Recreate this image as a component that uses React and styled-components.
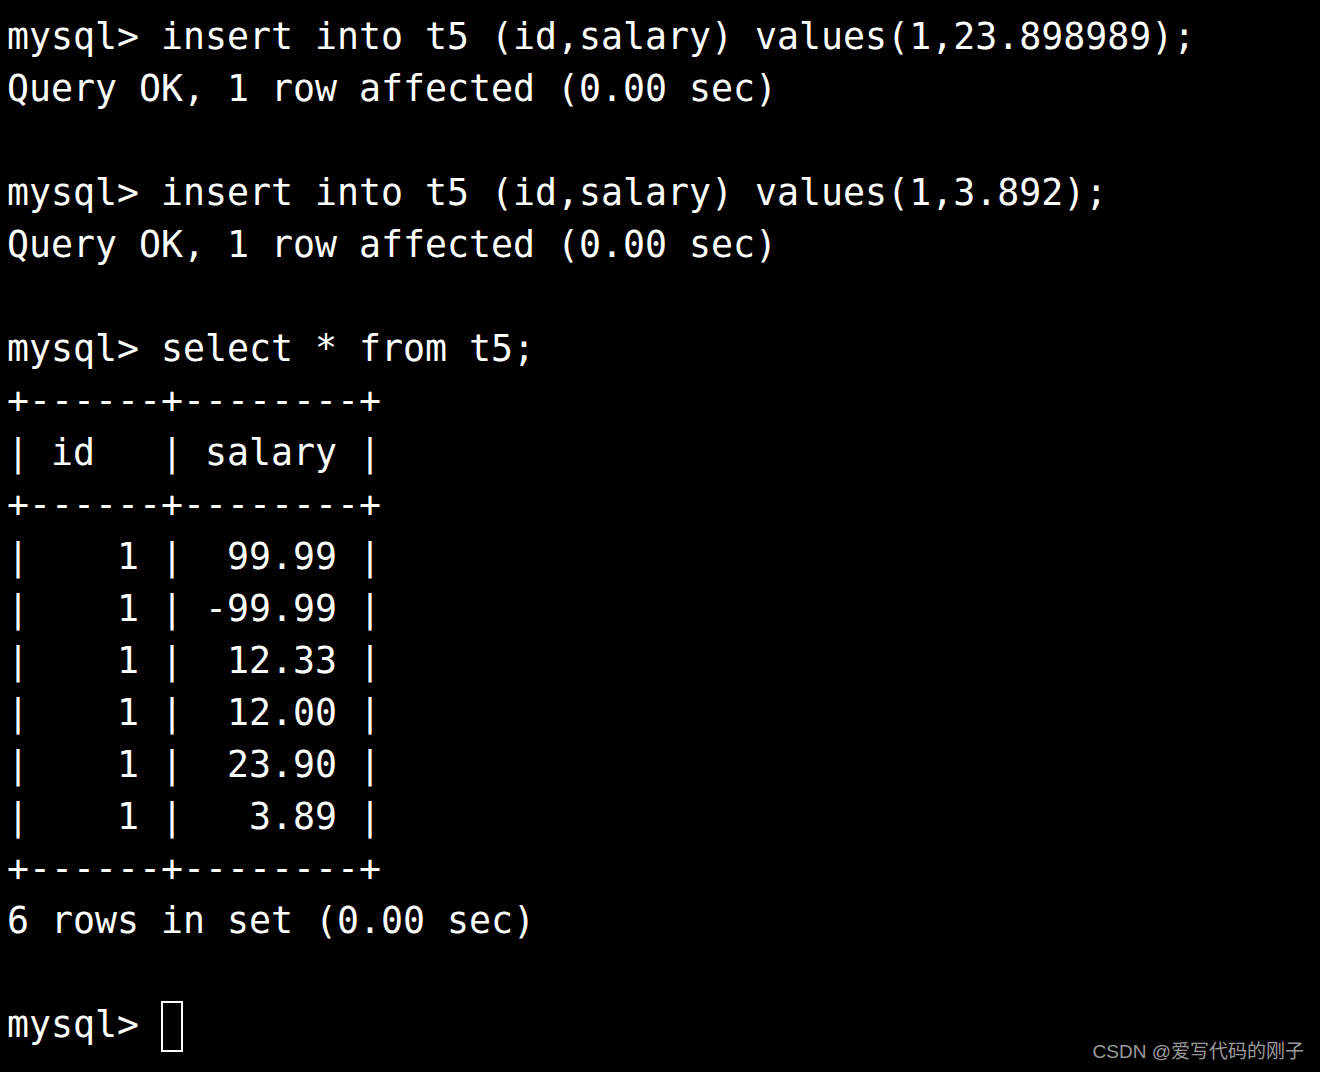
import React from "react";
import styled, { createGlobalStyle } from "styled-components";

const GlobalStyle = createGlobalStyle`
  html, body {
    margin: 0;
    padding: 0;
    background: #000;
  }
`;

const lines = [
  "mysql> insert into t5 (id,salary) values(1,23.898989);",
  "Query OK, 1 row affected (0.00 sec)",
  "",
  "mysql> insert into t5 (id,salary) values(1,3.892);",
  "Query OK, 1 row affected (0.00 sec)",
  "",
  "mysql> select * from t5;",
  "+------+--------+",
  "| id   | salary |",
  "+------+--------+",
  "|    1 |  99.99 |",
  "|    1 | -99.99 |",
  "|    1 |  12.33 |",
  "|    1 |  12.00 |",
  "|    1 |  23.90 |",
  "|    1 |   3.89 |",
  "+------+--------+",
  "6 rows in set (0.00 sec)",
  "",
];

function App() {
  return (
    <Terminal>
      <GlobalStyle />
      {lines.map((l, i) => (
        <Line key={i}>{l}</Line>
      ))}
      <Line>
        {"mysql> "}
        <Cursor />
      </Line>
      <Watermark>CSDN @爱写代码的刚子</Watermark>
    </Terminal>
  );
}

const Terminal = styled.div`
  position: relative;
  width: 1320px;
  height: 1072px;
  box-sizing: border-box;
  padding: 11px 0 0 7px;
  background: #000;
  color: #fff;
  font-family: "DejaVu Sans Mono", "Liberation Mono", monospace;
  font-size: 36.55px;
  overflow: hidden;
`;

const Line = styled.div`
  height: 52px;
  line-height: 52px;
  white-space: pre;
  display: flex;
  align-items: center;
`;

const Cursor = styled.span`
  display: inline-block;
  width: 18px;
  height: 47px;
  border: 2px solid #fff;
  margin-top: 2px;
`;

const Watermark = styled.div`
  position: absolute;
  right: 16px;
  bottom: 9px;
  font-family: "Liberation Sans", "Noto Sans CJK SC", sans-serif;
  font-size: 19px;
  color: #9a9a9a;
`;

export default App;
